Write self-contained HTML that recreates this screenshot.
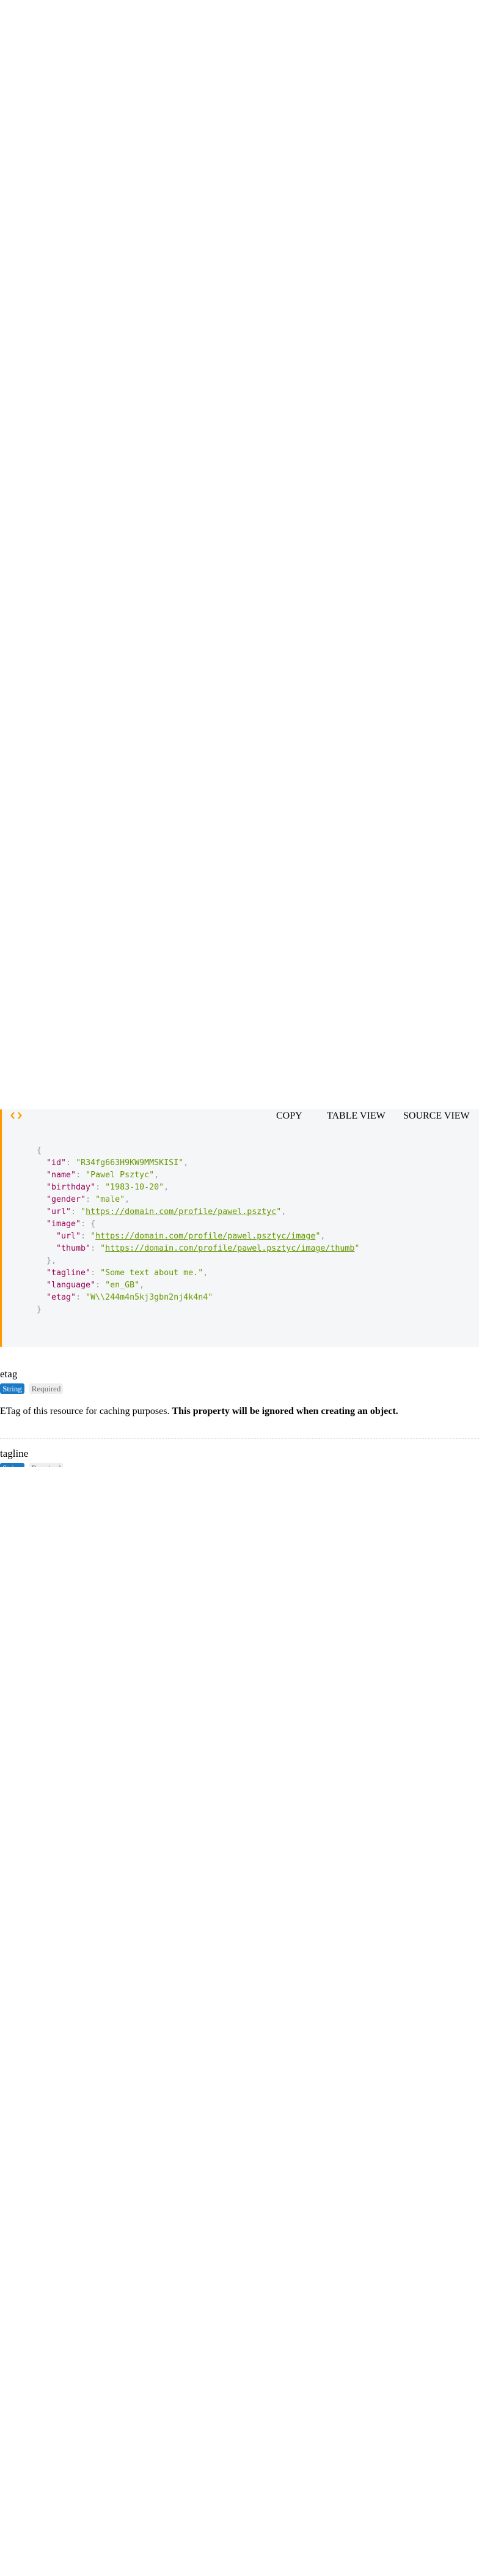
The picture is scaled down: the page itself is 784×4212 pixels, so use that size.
<!DOCTYPE html>
<html><head><meta charset="utf-8"><style>
html,body{margin:0;padding:0;background:#fff;width:784px;height:4212px;overflow:hidden;position:relative;font-family:"Liberation Serif",serif;}
.box{position:absolute;left:0;top:1814px;width:784px;height:388px;background:#f5f6f8;border-left:3px solid #ff9800;box-sizing:border-box;}
.hdr{position:absolute;top:1814px;font-size:16px;line-height:22px;color:#000;}
.code{position:absolute;left:60px;top:1872px;font-family:"DejaVu Sans Mono",monospace;font-size:13.3px;line-height:20px;white-space:pre;color:#999;}
.k{color:#990055}.s{color:#669900}.s a{color:#669900;text-decoration:underline}
.abs{position:absolute;}
.badge{position:absolute;height:17px;line-height:17px;font-size:13px;border-radius:3px;text-align:center;}
</style></head><body>
<div class="box"></div>
<svg class="abs" style="left:16px;top:1817px" width="22" height="14" viewBox="0 0 22 14"><path d="M7 2 L2.5 7 L7 12 M14 2 L18.5 7 L14 12" stroke="#ff9800" stroke-width="2.2" fill="none"/></svg>
<div class="hdr" style="left:452px">COPY</div>
<div class="hdr" style="left:535px">TABLE VIEW</div>
<div class="hdr" style="left:660px">SOURCE VIEW</div>
<div class="code">{
  <span class="k">"id"</span>: <span class="s">"R34fg663H9KW9MMSKISI"</span>,
  <span class="k">"name"</span>: <span class="s">"Pawel Psztyc"</span>,
  <span class="k">"birthday"</span>: <span class="s">"1983-10-20"</span>,
  <span class="k">"gender"</span>: <span class="s">"male"</span>,
  <span class="k">"url"</span>: <span class="s">"<a>https://domain.com/profile/pawel.psztyc</a>"</span>,
  <span class="k">"image"</span>: {
    <span class="k">"url"</span>: <span class="s">"<a>https://domain.com/profile/pawel.psztyc/image</a>"</span>,
    <span class="k">"thumb"</span>: <span class="s">"<a>https://domain.com/profile/pawel.psztyc/image/thumb</a>"</span>
  },
  <span class="k">"tagline"</span>: <span class="s">"Some text about me."</span>,
  <span class="k">"language"</span>: <span class="s">"en_GB"</span>,
  <span class="k">"etag"</span>: <span class="s">"W\\244m4n5kj3gbn2nj4k4n4"</span>
}</div>
<div class="abs" style="left:0;top:2236px;font-size:17px;line-height:22px">etag</div>
<div class="badge" style="left:0;top:2262px;width:40px;background:#1a7ac6;color:#fff">String</div>
<div class="badge" style="left:48px;top:2262px;width:55px;background:#eee;color:#666">Required</div>
<div class="abs" style="left:0;top:2298px;font-size:16px;line-height:20px">ETag of this resource for caching purposes. <b>This property will be ignored when creating an object.</b></div>
<div class="abs" style="left:0;top:2352px;width:784px;border-top:1px dashed #c8d4e0"></div>
<div class="abs" style="left:0;top:2366px;font-size:17px;line-height:22px">tagline</div>
<div class="abs" style="left:0;top:2392px;width:120px;height:7px;overflow:hidden">
<div class="badge" style="left:0;top:0;width:40px;background:#1a7ac6;color:#fff">String</div>
<div class="badge" style="left:48px;top:0;width:55px;background:#eee;color:#666">Required</div>
</div>
</body></html>
